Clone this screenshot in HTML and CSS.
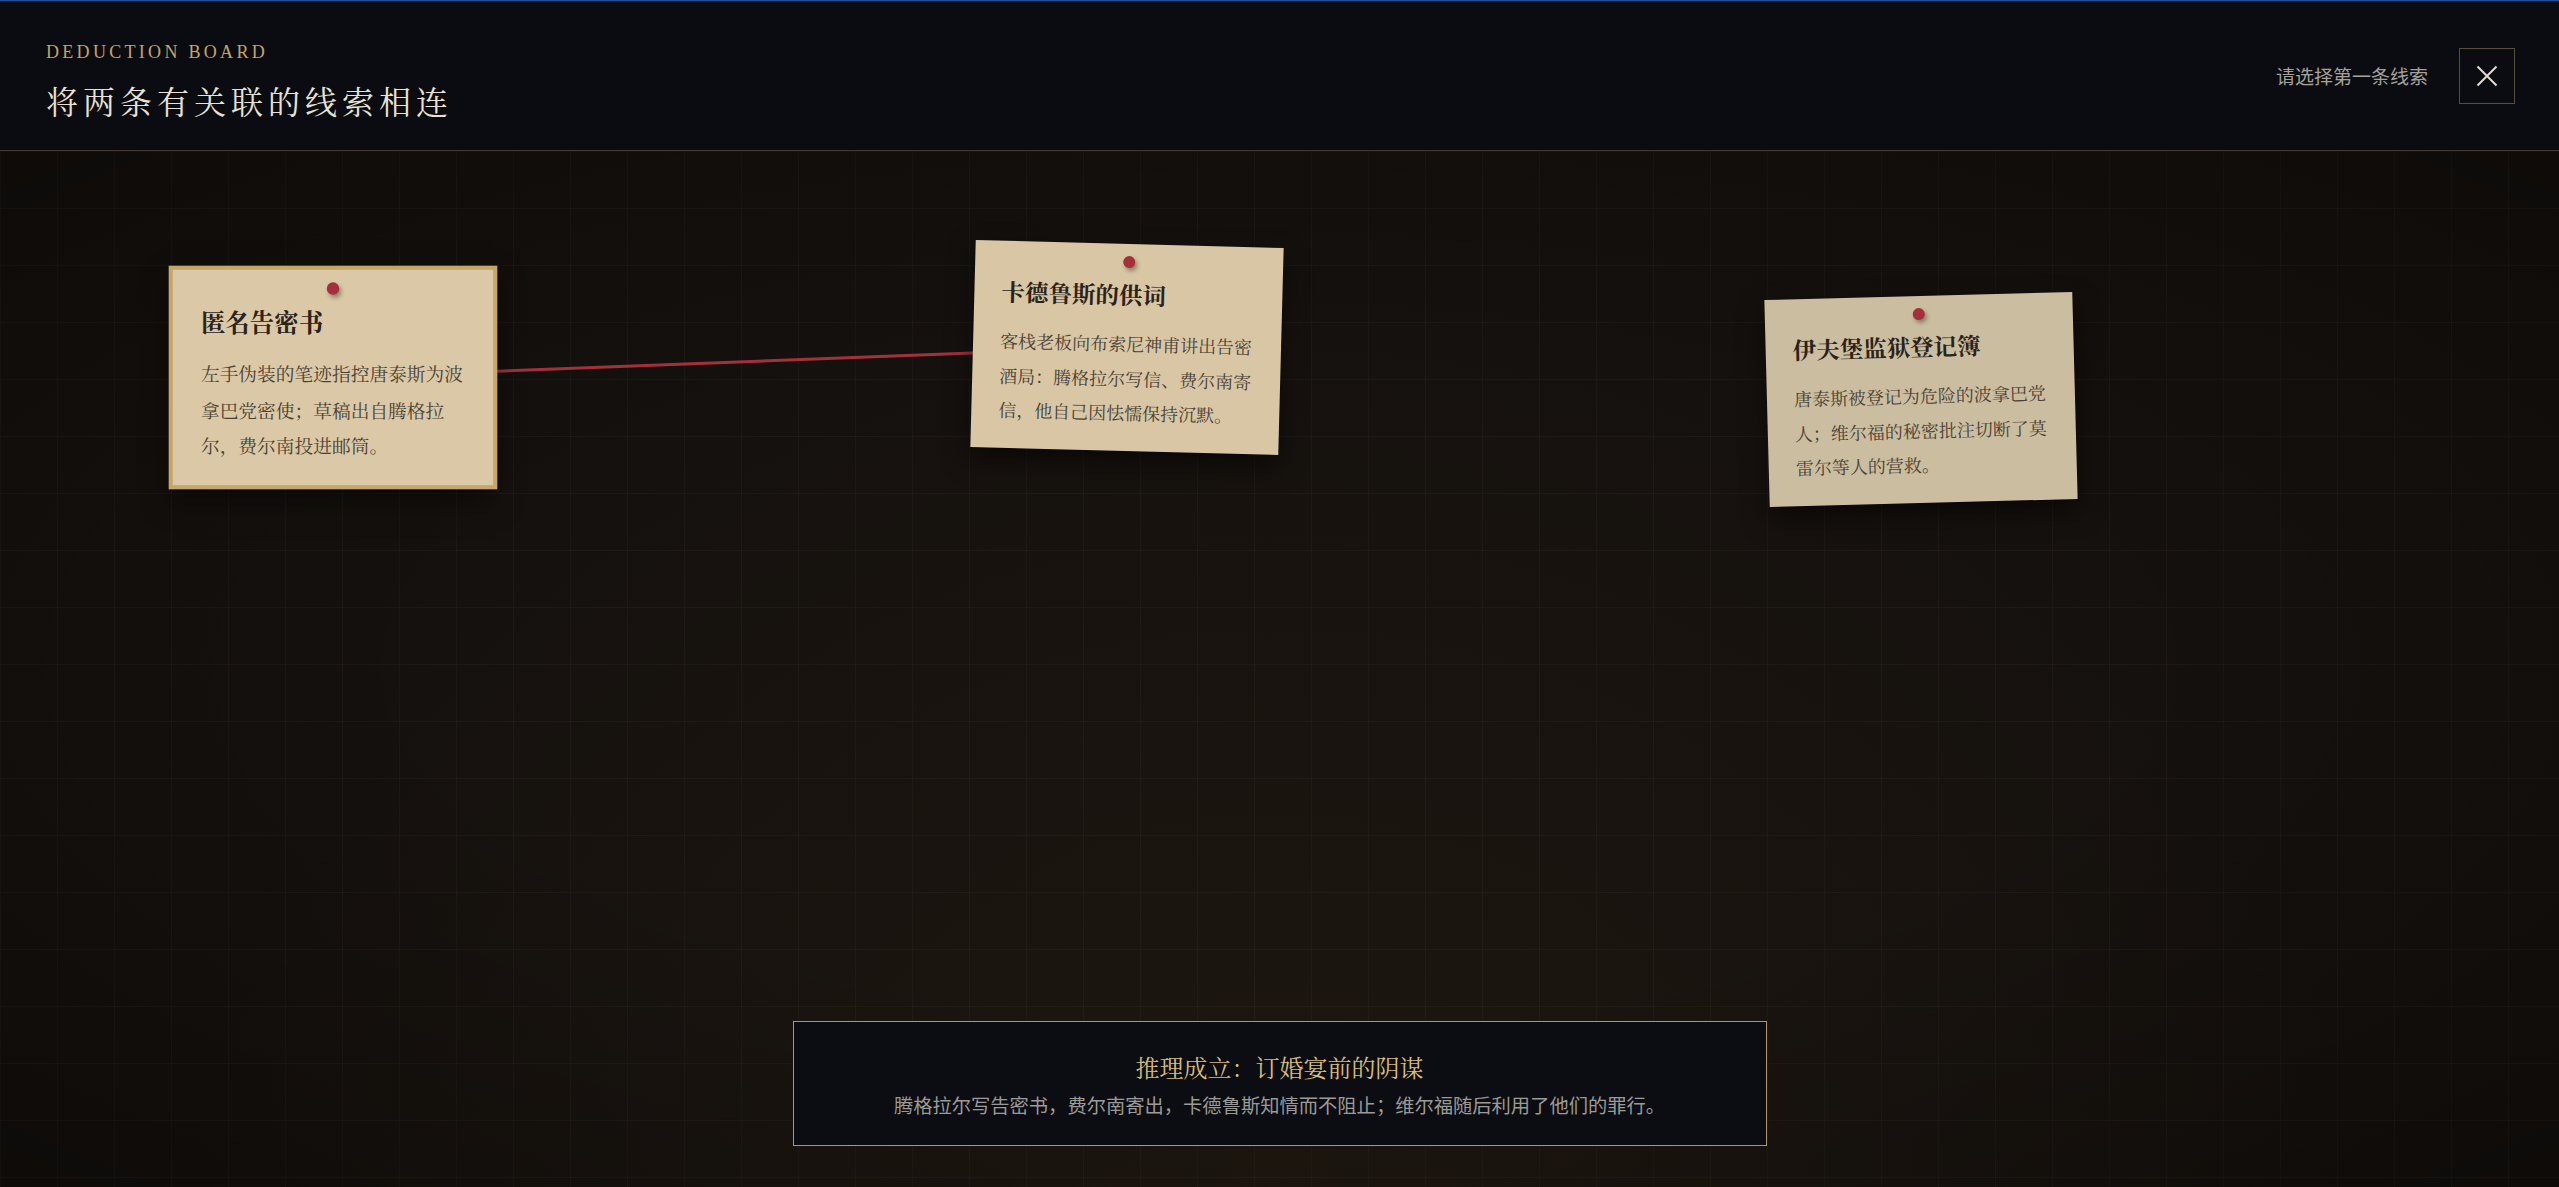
FILE: index.html
```html
<!DOCTYPE html>
<html lang="zh-CN">
<head>
    <meta charset="UTF-8">
    <meta name="viewport" content="width=device-width, initial-scale=1.0">
    <title>Deduction Board</title>
    <link rel="stylesheet" href="styles.css">
</head>
<body>
    <header class="topbar">
        <div class="heading">
            <div class="eyebrow">DEDUCTION BOARD</div>
            <h1>将两条有关联的线索相连</h1>
        </div>
        <div class="status">
            <span class="hint">请选择第一条线索</span>
            <button class="close" aria-label="关闭">
                <svg width="22" height="22" viewBox="0 0 22 22">
                    <path d="M1.5 1.5 L20.5 20.5 M20.5 1.5 L1.5 20.5" stroke="#e4dccd" stroke-width="2" fill="none"/>
                </svg>
            </button>
        </div>
    </header>

    <main class="board">
        <svg class="threads" width="2559" height="1036">
            <line x1="333" y1="226.5" x2="1127" y2="196" stroke="#a3313c" stroke-width="3"/>
        </svg>

        <article class="clue clue-letter selected">
            <span class="pin"></span>
            <h2>匿名告密书</h2>
            <p>左手伪装的笔迹指控唐泰斯为波拿巴党密使；草稿出自腾格拉尔，费尔南投进邮筒。</p>
        </article>

        <article class="clue clue-testimony">
            <span class="pin"></span>
            <h2>卡德鲁斯的供词</h2>
            <p>客栈老板向布索尼神甫讲出告密酒局：腾格拉尔写信、费尔南寄信，他自己因怯懦保持沉默。</p>
        </article>

        <article class="clue clue-register dim">
            <span class="pin"></span>
            <h2>伊夫堡监狱登记簿</h2>
            <p>唐泰斯被登记为危险的波拿巴党人；维尔福的秘密批注切断了莫雷尔等人的营救。</p>
        </article>

        <div class="verdict">
            <div class="verdict-title">推理成立：订婚宴前的阴谋</div>
            <div class="verdict-text">腾格拉尔写告密书，费尔南寄出，卡德鲁斯知情而不阻止；维尔福随后利用了他们的罪行。</div>
        </div>
    </main>
</body>
</html>
```

FILE: styles.css
```css
body {
    margin: 0;
    height: 100vh;
    overflow: hidden;
    background: #15110e;
    font-family: "Noto Serif CJK SC", "Liberation Serif", "Noto Sans CJK SC", serif;
}

.topbar {
    box-sizing: border-box;
    height: 151px;
    display: flex;
    align-items: center;
    justify-content: space-between;
    padding: 0 44px 0 46px;
    background: #0b0c11;
    border-top: 1px solid #1d4f9f;
    border-bottom: 1px solid #433a2b;
}
.heading {
    margin-top: 10px;
}
.eyebrow {
    font-family: "Liberation Serif", serif;
    font-size: 18px;
    line-height: 22px;
    letter-spacing: 3.3px;
    color: #c3a568;
}
.heading h1 {
    margin: 17px 0 0;
    font-size: 32px;
    line-height: 40px;
    font-weight: 400;
    letter-spacing: 5px;
    color: #e9e2d4;
}
.status {
    display: flex;
    align-items: center;
    gap: 31px;
}
.hint {
    font-family: "Noto Sans CJK SC", sans-serif;
    font-size: 19px;
    color: #a6a29b;
}
.close {
    width: 56px;
    height: 56px;
    display: flex;
    align-items: center;
    justify-content: center;
    padding: 0;
    background: transparent;
    border: 1px solid #574d3d;
    cursor: pointer;
}

.board {
    position: relative;
    box-sizing: border-box;
    height: calc(100vh - 151px);
    display: flex;
    flex-direction: column;
    justify-content: flex-end;
    align-items: center;
    padding-bottom: 41px;
    background-color: #15110e;
    background-image:
        radial-gradient(ellipse at 50% 100%, rgba(70, 50, 25, 0.18), transparent 60%),
        radial-gradient(ellipse at center, transparent 45%, rgba(0, 0, 0, 0.35) 100%),
        linear-gradient(rgba(255, 235, 210, 0.035) 1px, transparent 1px),
        linear-gradient(90deg, rgba(255, 235, 210, 0.035) 1px, transparent 1px);
    background-size: 100% 100%, 100% 100%, 57px 57px, 57px 57px;
}
.threads {
    position: absolute;
    top: 0;
    left: 0;
}

.clue {
    position: absolute;
    box-sizing: border-box;
    width: 308px;
    padding: 34px 27px 21px;
    background: #d8c6a4;
    box-shadow: 0 12px 26px rgba(0, 0, 0, 0.55);
}
.clue h2 {
    margin: 0;
    font-size: 23.5px;
    line-height: 33px;
    font-weight: 700;
    color: #2a231a;
}
.clue p {
    margin: 15px 0 0;
    font-size: 18px;
    line-height: 34.6px;
    color: #4a4134;
}
.pin {
    position: absolute;
    top: 12px;
    left: 50%;
    width: 12px;
    height: 12px;
    margin-left: -6px;
    border-radius: 50%;
    background: #a5303b;
    box-shadow: 2px 3px 4px rgba(0, 0, 0, 0.35);
}
.clue.selected {
    background: #dac8a6;
    box-shadow: 0 0 0 4px #c6a76b, 0 12px 28px rgba(0, 0, 0, 0.55);
}
.clue.dim {
    background: #cbbd9f;
}
.clue-letter {
    left: 179px;
    top: 123px;
    transform: scale(1.04);
}
.clue-testimony {
    left: 973px;
    top: 93px;
    transform: rotate(1.5deg);
}
.clue-register {
    left: 1767px;
    top: 145px;
    transform: rotate(-1.5deg);
}

.verdict {
    box-sizing: border-box;
    width: 974px;
    height: 125px;
    padding: 29px 20px 0;
    text-align: center;
    background: #0b0d12;
    border: 1px solid #b3965d;
}
.verdict-title {
    font-size: 24px;
    line-height: 32px;
    color: #d9bd7c;
}
.verdict-text {
    margin-top: 8px;
    font-family: "Noto Sans CJK SC", sans-serif;
    font-size: 19.3px;
    line-height: 28px;
    color: #9c9a96;
}
```
